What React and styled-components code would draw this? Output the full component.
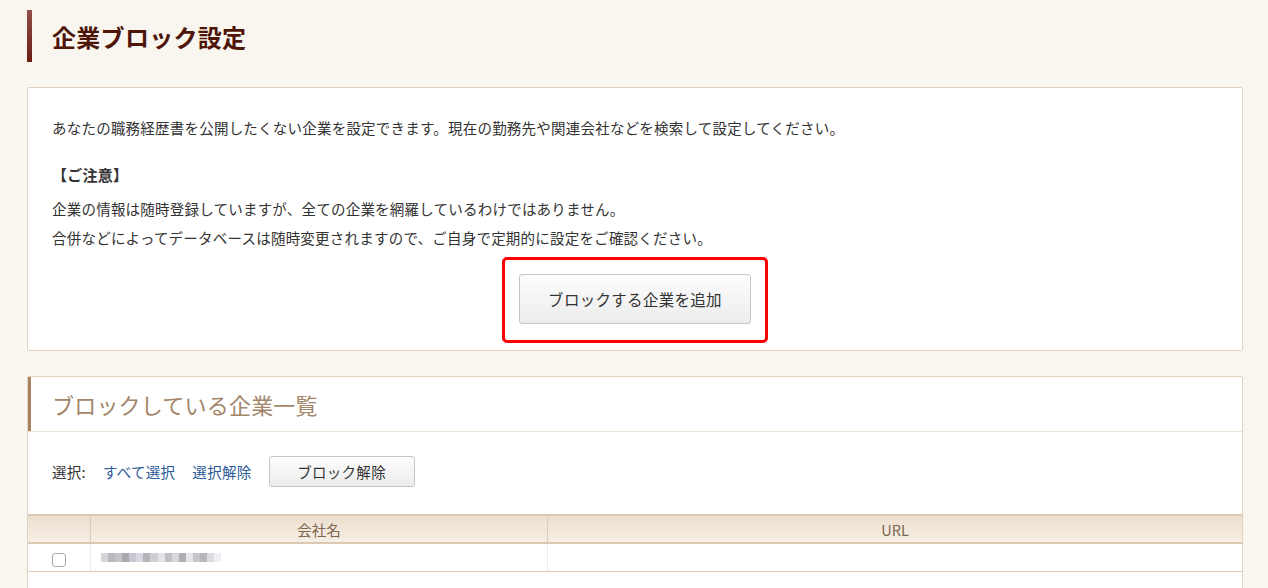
import styled, { createGlobalStyle } from "styled-components"

const GlobalStyle = createGlobalStyle`
  body {
    margin: 0;
    background: #f9f6ef;
    font-family: "Noto Sans CJK JP", "Noto Sans", sans-serif;
    color: #333;
  }
`;

const Page = styled.div`
  padding: 10px 25px 0 27px;
  height: 578px;
  overflow: hidden;
`;

const PageTitle = styled.h1`
  margin: 0;
  height: 52px;
  display: flex;
  align-items: center;
  padding-left: 20px;
  border-left: 5px solid #7a2e26;
  border-image: linear-gradient(#93504d, #6a1c12) 1;
  font-size: 24px;
  font-weight: 700;
  color: #4e1509;
  letter-spacing: 0.3px;
`;

const Panel = styled.section`
  background: #fff;
  border: 1px solid #e2d3c1;
  border-radius: 2px;
  margin-top: ${(props) => props.top}px;
`;

const Intro = styled.div`
  padding: 25px 24px 7px;
  font-size: 14.5px;
  line-height: 29px;
  letter-spacing: 0.22px;
  p {
    margin: 0;
  }
`;

const Notice = styled.p`
  && {
    margin-top: 18px;
    margin-bottom: 5px;
  }
  font-weight: 700;
  font-size: 15px;
  color: #333;
`;

const Highlight = styled.div`
  width: 232px;
  margin: 5px auto 0;
  padding: 14px 14px 16px;
  border: 3px solid #ff0000;
  border-radius: 5px;
`;

const GreyButton = styled.button`
  display: block;
  width: ${(props) => props.w}px;
  height: ${(props) => props.h}px;
  border: 1px solid #c6c6c6;
  border-radius: 3px;
  background: linear-gradient(#fdfdfd, #ececec);
  font-family: inherit;
  font-size: ${(props) => props.fs}px;
  letter-spacing: 0.3px;
  color: #333;
  padding: 0;
  cursor: pointer;
`;

const SectionHead = styled.h2`
  margin: 0;
  height: 54px;
  display: flex;
  align-items: center;
  padding-left: 24px;
  box-shadow: inset 3px 0 0 #a88160;
  border-bottom: 1px solid #eee4d8;
  font-size: 22px;
  font-weight: 400;
  color: #a3866a;
  letter-spacing: 0.2px;
`;

const Controls = styled.div`
  display: flex;
  align-items: center;
  padding: 24px 24px 27px;
  font-size: 14.5px;
  letter-spacing: 0.3px;
`;

const Label = styled.span`
  margin-right: 17px;
`;

const TextLink = styled.a`
  color: #2b5a97;
  text-decoration: none;
  margin-right: 17px;
  cursor: pointer;
`;

const Table = styled.table`
  width: 100%;
  border-collapse: collapse;
  font-size: 14.5px;
`;

const Th = styled.th`
  height: 26px;
  padding: 0;
  font-weight: 400;
  color: #7d6650;
  background: linear-gradient(#ecdfcf, #f6eee4);
  border-top: 2px solid #ddc9b3;
  border-bottom: 2px solid #ddc9b3;
  border-left: 1px solid #e0ccb6;
  width: ${(props) => props.w || "auto"};
  &:first-child {
    border-left: none;
  }
`;

const Td = styled.td`
  height: 27px;
  padding: 0 10px;
  border-bottom: 1px solid #ddcbb6;
  border-left: 1px solid #f3ebe0;
  text-align: ${(props) => props.align || "left"};
  &:first-child {
    border-left: none;
  }
`;

const Check = styled.span`
  display: inline-block;
  width: 12px;
  height: 12px;
  border: 1px solid #a9a9a9;
  border-radius: 3px;
  background: #fff;
  vertical-align: middle;
  margin-left: -1px;
`;

const Blur = styled.div`
  display: flex;
  height: 9px;
  width: 120px;
  filter: blur(0.6px);
`;

const Pix = styled.span`
  flex: 1;
  background: ${(props) => props.c};
`;

const TableTail = styled.div`
  height: 40px;
`;

const blurCols = [
  "#d4d4da", "#b8b9bf", "#c3c4ca", "#a9aab0", "#c7c8cf", "#d8d9e0",
  "#b4b5bb", "#cfd0d6", "#e2e3ea", "#bfc0c6", "#d6d7de", "#aeafb5",
  "#e4e6ec", "#c5c6cc", "#b7b8be", "#dcdde3", "#eef0f5",
]

const App = () => {
  return (
    <>
      <GlobalStyle />
      <Page>
        <PageTitle>企業ブロック設定</PageTitle>

        <Panel top={25}>
          <Intro>
            <p>あなたの職務経歴書を公開したくない企業を設定できます。現在の勤務先や関連会社などを検索して設定してください。</p>
            <Notice>【ご注意】</Notice>
            <p>企業の情報は随時登録していますが、全ての企業を網羅しているわけではありません。</p>
            <p>合併などによってデータベースは随時変更されますので、ご自身で定期的に設定をご確認ください。</p>
            <Highlight>
              <GreyButton w={232} h={50} fs={15.5}>ブロックする企業を追加</GreyButton>
            </Highlight>
          </Intro>
        </Panel>

        <Panel top={25}>
          <SectionHead>ブロックしている企業一覧</SectionHead>
          <Controls>
            <Label>選択:</Label>
            <TextLink>すべて選択</TextLink>
            <TextLink>選択解除</TextLink>
            <GreyButton w={146} h={31} fs={14.5}>ブロック解除</GreyButton>
          </Controls>
          <Table>
            <thead>
              <tr>
                <Th w="62px"></Th>
                <Th w="456px">会社名</Th>
                <Th>URL</Th>
              </tr>
            </thead>
            <tbody>
              <tr>
                <Td align="center"><Check /></Td>
                <Td>
                  <Blur>
                    {blurCols.map((c, i) => <Pix key={i} c={c} />)}
                  </Blur>
                </Td>
                <Td></Td>
              </tr>
            </tbody>
          </Table>
          <TableTail />
        </Panel>
      </Page>
    </>
  )
}

export default App
